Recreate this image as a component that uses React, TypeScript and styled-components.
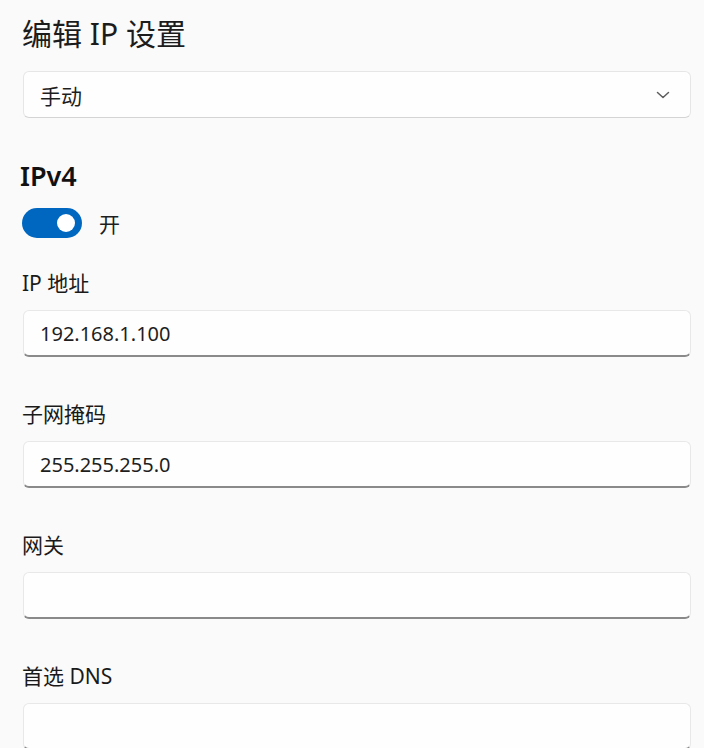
import * as React from 'react';
import { createGlobalStyle, styled } from 'styled-components';

const GlobalStyle = createGlobalStyle`
  html, body {
    margin: 0;
    padding: 0;
    background: #fafafa;
  }
  body {
    font-family: "Noto Sans", "Noto Sans CJK SC", sans-serif;
    color: #1b1b1b;
  }
`;

const Page = styled.div`
  display: flex;
  flex-direction: column;
  padding: 14px 13px 0 23px;
  min-height: 748px;
  box-sizing: border-box;
`;

const Title = styled.h1`
  margin: 0 0 0 -1px;
  font-size: 30px;
  font-weight: 400;
  line-height: 40px;
  color: #1c1c1c;
`;

const Select = styled.div`
  margin-top: 17px;
  height: 47px;
  box-sizing: border-box;
  display: flex;
  align-items: center;
  justify-content: space-between;
  padding: 0 20px 0 16px;
  background: #fefefe;
  border: 1px solid #e6e6e6;
  border-bottom-color: #d4d4d4;
  border-radius: 6px;
  font-size: 21px;
  color: #1e1e1e;
`;

const SectionTitle = styled.h2`
  margin: 40px 0 0 -3px;
  font-size: 27px;
  font-weight: 600;
  line-height: 36px;
  color: #111;
`;

const ToggleRow = styled.div`
  margin-top: 14px;
  display: flex;
  align-items: center;
  gap: 17px;
  font-size: 21px;
  color: #1e1e1e;
`;

const Toggle = styled.div<{ $on: boolean }>`
  width: 60px;
  height: 30px;
  box-sizing: border-box;
  margin-left: -1px;
  border-radius: 15px;
  background: ${(p) => (p.$on ? '#0067c0' : 'transparent')};
  display: flex;
  align-items: center;
  justify-content: ${(p) => (p.$on ? 'flex-end' : 'flex-start')};
  padding: 0 7px;
  &::after {
    content: '';
    width: 18px;
    height: 18px;
    border-radius: 50%;
    background: #fff;
  }
`;

const Field = styled.div<{ $first?: boolean }>`
  margin-top: ${(p) => (p.$first ? '28px' : '40px')};
  display: flex;
  flex-direction: column;
  gap: 10px;
`;

const Label = styled.label`
  font-size: 21px;
  line-height: 34px;
  margin-left: -1px;
  color: #1a1a1a;
`;

const Input = styled.div`
  height: 47px;
  box-sizing: border-box;
  display: flex;
  align-items: center;
  padding: 0 16px;
  background: #fefefe;
  border: 1px solid #e8e8e8;
  border-bottom: 2px solid #8a8a8a;
  border-radius: 6px;
  font-size: 20px;
  color: #1e1e1e;
`;

const Chevron = () => (
  <svg width="14" height="8" viewBox="0 0 14 8" fill="none">
    <path d="M1.5 1.5 L7 6.5 L12.5 1.5" stroke="#5c5c5c" strokeWidth="1.5" strokeLinecap="round" strokeLinejoin="round" />
  </svg>
);

const fields = [
  { label: 'IP 地址', value: '192.168.1.100' },
  { label: '子网掩码', value: '255.255.255.0' },
  { label: '网关', value: '' },
  { label: '首选 DNS', value: '' },
];

export default function App() {
  return (
    <>
      <GlobalStyle />
      <Page>
        <Title>编辑 IP 设置</Title>
        <Select>
          <span>手动</span>
          <Chevron />
        </Select>
        <SectionTitle>IPv4</SectionTitle>
        <ToggleRow>
          <Toggle $on />
          <span>开</span>
        </ToggleRow>
        {fields.map((f, i) => (
          <Field key={f.label} $first={i === 0}>
            <Label>{f.label}</Label>
            <Input>{f.value}</Input>
          </Field>
        ))}
      </Page>
    </>
  );
}
